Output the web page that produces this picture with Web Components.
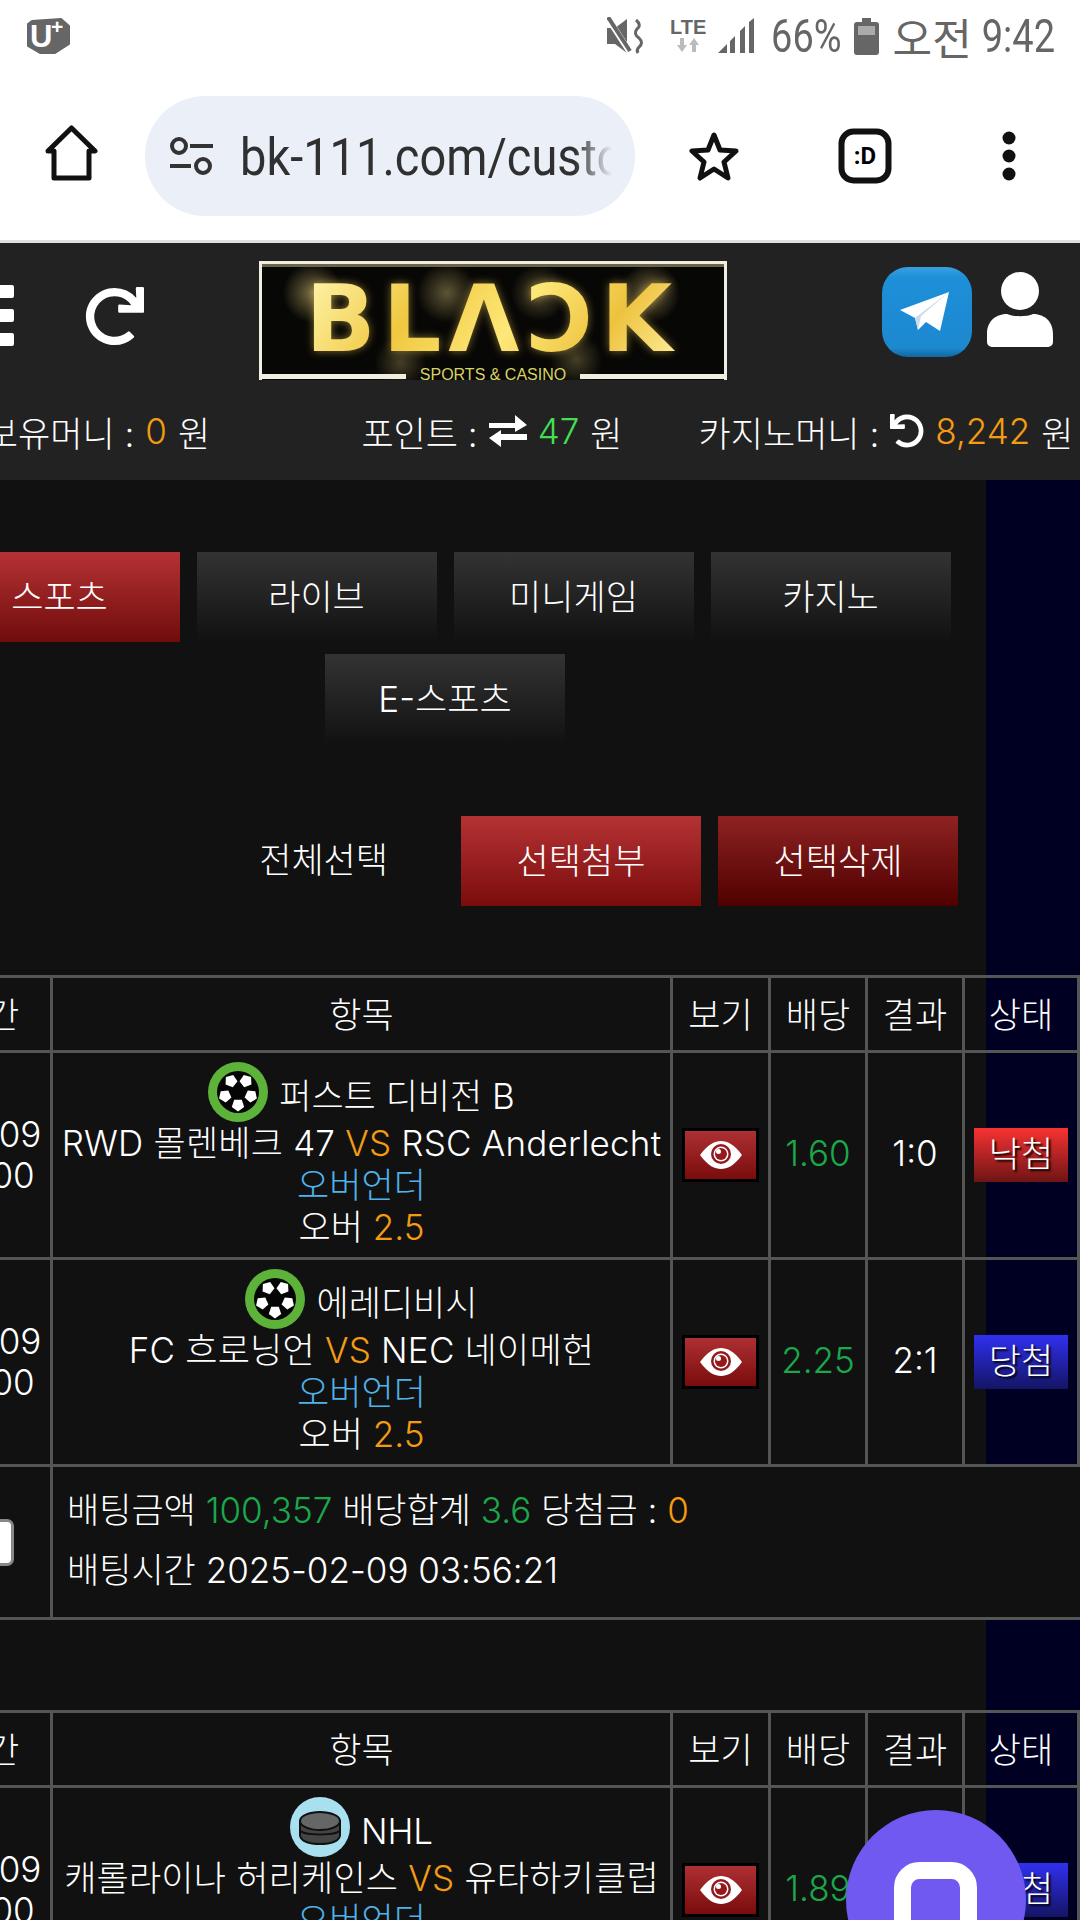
<!DOCTYPE html>
<html lang="ko">
<head>
<meta charset="utf-8">
<title>BLACK</title>
<style>
    html, body { margin: 0; background: #111; }
    body {
        width: 1080px;
        height: 1920px;
        overflow: hidden;
        position: relative;
        font-family: 'Inter', 'Noto Sans CJK KR', sans-serif;
        font-weight: 300;
        font-size: 35px;
        color: #fff;
    }
</style>
</head>
<body>
<status-bar></status-bar>
<browser-bar url="bk-111.com/custom"></browser-bar>
<site-header></site-header>
<main-area>
    <game-tabs>
        <game-tab active>스포츠</game-tab>
        <game-tab>라이브</game-tab>
        <game-tab>미니게임</game-tab>
        <game-tab>카지노</game-tab>
        <game-tab>E-스포츠</game-tab>
    </game-tabs>
    <action-bar></action-bar>
    <bet-table>
        <bet-row sport="soccer" league="퍼스트 디비전 B" home="RWD 몰렌베크 47" away="RSC Anderlecht" odds="1.60" result="1:0" status="낙첨"></bet-row>
        <bet-row sport="soccer" league="에레디비시" home="FC 흐로닝언" away="NEC 네이메헌" odds="2.25" result="2:1" status="당첨"></bet-row>
        <bet-summary stake="100,357" total="3.6" win="0" time="2025-02-09 03:56:21"></bet-summary>
    </bet-table>
    <bet-table>
        <bet-row sport="hockey" league="NHL" home="캐롤라이나 허리케인스" away="유타하키클럽" odds="1.89" result="" status="당첨"></bet-row>
    </bet-table>
</main-area>
<chat-button></chat-button>

<script>
const COLS = '129px 620px 98px 97px 97px 115px';

// five points around a centre, for the panels of the ball
const pentagon = (cx, cy, r, turn) => {
    const points = [];
    for (let i = 0; i < 5; i++) {
        const angle = (turn + i * 72 - 90) * Math.PI / 180;
        points.push((cx + r * Math.cos(angle)).toFixed(1) + ',' + (cy + r * Math.sin(angle)).toFixed(1));
    }
    return `<polygon points="${points.join(' ')}"/>`;
};

class StatusBar extends HTMLElement {
    constructor() {
        super();
        this.attachShadow({ mode: 'open' });
        this.shadowRoot.innerHTML = `
            <style>
            :host { display: flex; align-items: center; height: 72px; padding: 0 25px 0 27px; background: #fff; color: #666; box-sizing: border-box; }
            .carrier { position: relative; width: 43px; height: 36px; margin-right: auto; }
            .carrier svg { display: block; }
            .carrier span { position: absolute; left: 3px; top: 3px; color: #fff; font: 700 31px/32px 'Liberation Sans', sans-serif; }
            .carrier sup { position: absolute; left: 24px; top: -2px; color: #fff; font: 700 21px/21px 'Liberation Sans', sans-serif; }
            .right { display: flex; align-items: center; }
            .tall { display: inline-block; font-family: 'Roboto', sans-serif; font-weight: 400; font-size: 38px; transform: scaleY(1.2); line-height: 1; }
            .lte { position: relative; width: 36px; height: 38px; margin: 0 12px 0 26px; font: 700 20px/20px 'Liberation Sans', sans-serif; text-align: center; }
            .lte svg { position: absolute; left: 7px; top: 21px; }
            .ko { font-family: 'Noto Sans CJK KR', sans-serif; font-weight: 400; font-size: 43px; transform: none; }
            </style>
            <div class="carrier">
                <svg width="43" height="36" viewBox="0 0 43 36"><path d="M5 3 L34 1 L42 8 V26 L28 35 H13 L1 28 V6 Z" fill="#666" stroke="#666" stroke-linejoin="round" stroke-width="2"/></svg>
                <span>U</span><sup>+</sup>
            </div>
            <div class="right">
                <svg width="37" height="38" viewBox="0 0 37 38" fill="#666">
                    <path d="M0 11 H8 L20 2 V36 L8 27 H0 Z"/>
                    <path d="M2 3 L24 37" stroke="#fff" stroke-width="6"/>
                    <path d="M1 0 L23 34" stroke="#666" stroke-width="4"/>
                    <path d="M29 3 q6 5 1 9 q-4 5 2 9 q5 5 0 9 q-3 3 -1 6" fill="none" stroke="#666" stroke-width="3"/>
                </svg>
                <div class="lte">LTE
                    <svg width="22" height="14" viewBox="0 0 22 14" fill="#bbb"><path d="M3 0 H7 V7 H10 L5 14 L0 7 H3 Z M15 14 H19 V7 H22 L17 0 L12 7 H15 Z"/></svg>
                </div>
                <svg width="36" height="36" viewBox="0 0 36 36" fill="#666" style="margin-right:17px">
                    <path d="M0 35 L9 26 V35 Z M12 23 L17 18 V35 H12 Z M22 13 L27 8 V35 H22 Z M31 4 L36 0 V35 H31 Z"/>
                </svg>
                <span class="tall">66%</span>
                <svg width="25" height="37" viewBox="0 0 25 37" style="margin:0 14px 0 12px"><path d="M8 0 H17 V4 H22 a3 3 0 0 1 3 3 V34 a3 3 0 0 1-3 3 H3 a3 3 0 0 1-3-3 V7 a3 3 0 0 1 3-3 H8 Z" fill="#666"/><rect x="4" y="8" width="17" height="9" fill="#aaa"/></svg>
                <span class="tall ko">오전</span>
                <span class="tall" style="margin-left:10px">9:42</span>
            </div>
        `;
    }
}

class BrowserBar extends HTMLElement {
    constructor() {
        super();
        this.attachShadow({ mode: 'open' });
        this.shadowRoot.innerHTML = `
            <style>
            :host { display: flex; align-items: center; height: 171px; background: #fff; border-bottom: 3px solid #dfe1dc; box-sizing: border-box; position: relative; }
            .home { margin: 0 47px 6px 45px; }
            .pill { display: flex; align-items: center; width: 490px; height: 120px; box-sizing: border-box; padding: 0 23px 0 25px; background: #ebeff8; border-radius: 60px; }
            .url { flex: 1; margin-left: 27px; overflow: hidden; white-space: nowrap; color: #303030; font: 400 47px 'Roboto', sans-serif; transform: scaleY(1.1); -webkit-mask-image: linear-gradient(to right, #000 90%, transparent); mask-image: linear-gradient(to right, #000 90%, transparent); }
            .star { margin-left: 53px; }
            .tabs { margin-left: 98px; }
            .more { margin-left: 110px; }
            </style>
            <svg class="home" width="53" height="56" viewBox="0 0 53 56"><path d="M26.5 3 L50 26 H44 V53 H9 V26 H3 Z" fill="none" stroke="#111" stroke-width="5" stroke-linejoin="round"/></svg>
            <div class="pill">
                <svg width="43" height="38" viewBox="0 0 43 38" fill="none" stroke="#333" stroke-width="4"><circle cx="9" cy="9" r="7"/><path d="M20 9 H43 M0 29 H21"/><circle cx="33" cy="29" r="7"/></svg>
                <div class="url">${this.getAttribute('url')}</div>
            </div>
            <svg class="star" width="52" height="50" viewBox="0 0 52 50"><path d="M26 4 L32 19 L48 20 L36 31 L40 47 L26 38 L12 47 L16 31 L4 20 L20 19 Z" fill="none" stroke="#111" stroke-width="5" stroke-linejoin="round"/></svg>
            <svg class="tabs" width="54" height="56" viewBox="0 0 54 56"><rect x="3.5" y="3.5" width="47" height="49" rx="12" fill="none" stroke="#111" stroke-width="6"/><text x="27" y="36" font-family="Roboto, sans-serif" font-weight="700" font-size="24" text-anchor="middle">:D</text></svg>
            <svg class="more" width="14" height="50" viewBox="0 0 14 50" fill="#111"><circle cx="7" cy="7" r="6.5"/><circle cx="7" cy="25" r="6.5"/><circle cx="7" cy="43" r="6.5"/></svg>
        `;
    }
}

class SiteHeader extends HTMLElement {
    constructor() {
        super();
        this.attachShadow({ mode: 'open' });
        this.shadowRoot.innerHTML = `
            <style>
            :host { display: block; height: 237px; background: #222; overflow: hidden; }
            .top { display: flex; align-items: flex-start; height: 137px; padding-top: 18px; box-sizing: border-box; }
            .burger { display: flex; flex-direction: column; gap: 11px; width: 14px; margin: 24px 71px 0 0; }
            .burger i { display: block; height: 13px; background: #fff; border-radius: 0 2px 2px 0; }
            .refresh { margin: 26px 115px 0 0; }
            site-logo { margin-right: 155px; }
            .tg { margin-top: 6px; }
            .user { margin: 11px 0 0 15px; }
            .money { display: grid; grid-template-columns: repeat(3, 394px); margin-left: -99px; height: 100px; align-items: center; padding-top: 2px; box-sizing: border-box; }
            .money div { display: flex; justify-content: center; align-items: center; gap: 11px; white-space: nowrap; }
            .orange { color: #f39c12; }
            .green { color: #44dd55; }
            </style>
            <div class="top">
                <div class="burger"><i></i><i></i><i></i></div>
                <svg class="refresh" width="59" height="59" viewBox="0 0 512 512" fill="#fff"><path d="M500.33 0h-47.41a12 12 0 0 0-12 12.57l4 82.76A247.42 247.42 0 0 0 256 8C119.34 8 7.9 119.53 8 256.19 8.1 393.07 119.1 504 256 504a247.1 247.1 0 0 0 166.18-63.91 12 12 0 0 0 .48-17.43l-34-34a12 12 0 0 0-16.38-.55A176 176 0 1 1 402.1 157.8l-101.53-4.87a12 12 0 0 0-12.57 12v47.41a12 12 0 0 0 12 12h200.33a12 12 0 0 0 12-12V12a12 12 0 0 0-12-12z"/></svg>
                <site-logo></site-logo>
                <svg class="tg" width="90" height="90" viewBox="0 0 90 90">
                    <defs><linearGradient id="tg" x1="0" y1="0" x2="0" y2="1"><stop offset="0" stop-color="#3aa0e0"/><stop offset=".12" stop-color="#1e8fd8"/><stop offset=".9" stop-color="#1c88d0"/><stop offset="1" stop-color="#12679e"/></linearGradient></defs>
                    <rect width="90" height="90" rx="26" fill="url(#tg)"/>
                    <path d="M67 25 L18 43 L33 51 L36 63 L44 55 L58 64 Z" fill="#fff"/>
                    <path d="M67 25 L33 51 L36 63 L39 49 Z" fill="#c8dcec"/>
                </svg>
                <svg class="user" width="66" height="75" viewBox="0 0 66 75" fill="#fff"><ellipse cx="33" cy="19" rx="19" ry="19"/><path d="M0 62 C0 48 10 42 20 42 C26 45 40 45 46 42 C56 42 66 48 66 62 V70 a5 5 0 0 1-5 5 H5 a5 5 0 0 1-5-5Z"/></svg>
            </div>
            <div class="money">
                <div>보유머니 : <span class="orange">0</span> 원</div>
                <div>포인트 :
                    <svg width="38" height="32" viewBox="0 0 38 32" fill="#fff"><path d="M0 8 H26 V0 L38 10 L26 17 V13 H0 Z M38 19 H12 V15 L0 23 L12 32 V25 H38 Z"/></svg>
                    <span class="green">47</span> 원</div>
                <div>카지노머니 :
                    <svg width="34" height="34" viewBox="0 0 512 512" fill="#fff" style="transform:scaleX(-1)"><path d="M500.33 0h-47.41a12 12 0 0 0-12 12.57l4 82.76A247.42 247.42 0 0 0 256 8C119.34 8 7.9 119.53 8 256.19 8.1 393.07 119.1 504 256 504a247.1 247.1 0 0 0 166.18-63.91 12 12 0 0 0 .48-17.43l-34-34a12 12 0 0 0-16.38-.55A176 176 0 1 1 402.1 157.8l-101.53-4.87a12 12 0 0 0-12.57 12v47.41a12 12 0 0 0 12 12h200.33a12 12 0 0 0 12-12V12a12 12 0 0 0-12-12z"/></svg>
                    <span class="orange">8,242</span> 원</div>
            </div>
        `;
    }
}

class SiteLogo extends HTMLElement {
    constructor() {
        super();
        this.attachShadow({ mode: 'open' });
        this.shadowRoot.innerHTML = `
            <style>
            :host { display: flex; flex-direction: column; align-items: center; width: 468px; height: 119px; box-sizing: border-box; padding: 10px 8px 0 0; border: solid #efeee0; border-width: 3px 3px 0; background:
                radial-gradient(circle at 11% 25%, rgba(255, 230, 140, .45), transparent 30px),
                radial-gradient(circle at 40% 25%, rgba(255, 230, 140, .35), transparent 30px),
                radial-gradient(circle at 60% 25%, rgba(255, 230, 140, .3), transparent 28px),
                radial-gradient(circle at 84% 25%, rgba(255, 230, 140, .4), transparent 30px),
                radial-gradient(circle at 30% 85%, rgba(255, 230, 140, .25), transparent 26px),
                radial-gradient(circle at 68% 82%, rgba(255, 230, 140, .25), transparent 26px),
                #070705;
                box-shadow: inset 0 3px 0 #6a6548; position: relative; overflow: hidden; }
            .word { font: 700 92px/92px 'DejaVu Sans', sans-serif; letter-spacing: 7px; margin-right: -7px; color: transparent; background: linear-gradient(125deg, #fff6b0, #f0c840 30%, #fde878 55%, #eec23e 78%, #fff0a0); -webkit-background-clip: text; background-clip: text; filter: drop-shadow(0 0 4px rgba(255, 215, 90, .5)); }
            .foot { display: flex; align-items: flex-end; gap: 14px; width: 100%; height: 14px; position: absolute; left: 0; bottom: 0; color: #d9d264; font: 400 16px/14px 'Liberation Sans', sans-serif; white-space: nowrap; }
            .foot span { transform: translateY(2px); }
            .foot i { flex: 1; height: 5px; margin-bottom: 1px; background: #efeee0; }
            </style>
            <div class="word">BLΛƆK</div>
            <div class="foot"><i></i><span>SPORTS &amp; CASINO</span><i></i></div>
        `;
    }
}

class MainArea extends HTMLElement {
    constructor() {
        super();
        this.attachShadow({ mode: 'open' });
        this.shadowRoot.innerHTML = `
            <style>
            :host { display: block; height: 1440px; overflow: hidden; background: linear-gradient(to right, #111 986px, #000022 986px); }
            </style>
            <slot></slot>
        `;
    }
}

class GameTabs extends HTMLElement {
    constructor() {
        super();
        this.attachShadow({ mode: 'open' });
        this.shadowRoot.innerHTML = `
            <style>
            :host { display: flex; flex-wrap: wrap; justify-content: center; gap: 12px 17px; width: 1070px; margin: 72px 0 0 -90px; }
            </style>
            <slot></slot>
        `;
    }
}

class GameTab extends HTMLElement {
    constructor() {
        super();
        this.attachShadow({ mode: 'open' });
        this.shadowRoot.innerHTML = `
            <style>
            :host { display: flex; align-items: center; justify-content: center; width: 240px; height: 90px; padding-bottom: 6px; box-sizing: border-box; background: linear-gradient(#333, #111); }
            :host([active]) { background: linear-gradient(#b53234, #700c0c); }
            </style>
            <slot></slot>
        `;
    }
}

class ActionBar extends HTMLElement {
    constructor() {
        super();
        this.attachShadow({ mode: 'open' });
        this.shadowRoot.innerHTML = `
            <style>
            :host { display: flex; align-items: center; justify-content: flex-end; gap: 17px; width: 958px; margin-top: 72px; }
            span { margin-right: 56px; padding-bottom: 8px; }
            div { display: flex; align-items: center; justify-content: center; width: 240px; height: 90px; padding-bottom: 6px; box-sizing: border-box; background: linear-gradient(#b53234, #7a0c0c); }
            div + div { background: linear-gradient(#8e2222, #500000); }
            </style>
            <span>전체선택</span>
            <div>선택첨부</div>
            <div>선택삭제</div>
        `;
    }
}

class BetTable extends HTMLElement {
    constructor() {
        super();
        this.attachShadow({ mode: 'open' });
        this.shadowRoot.innerHTML = `
            <style>
            :host { display: block; width: 1156px; margin: 69px 0 90px -76px; border-top: 3px solid #555; }
            .head { display: grid; grid-template-columns: ${COLS}; height: 75px; border-bottom: 3px solid #555; box-sizing: border-box; }
            .head div { display: flex; align-items: center; justify-content: center; border-right: 3px solid #555; padding-bottom: 4px; }
            </style>
            <div class="head"><div>시간</div><div>항목</div><div>보기</div><div>배당</div><div>결과</div><div>상태</div></div>
            <slot></slot>
        `;
    }
}

class BetRow extends HTMLElement {
    constructor() {
        super();
        this.attachShadow({ mode: 'open' });
        const a = (n) => this.getAttribute(n);
        const win = a('status') === '당첨';
        this.shadowRoot.innerHTML = `
            <style>
            :host { display: grid; grid-template-columns: ${COLS}; height: 207px; border-bottom: 3px solid #555; box-sizing: border-box; }
            .c { display: flex; flex-direction: column; align-items: center; justify-content: center; border-right: 3px solid #555; line-height: 42px; text-align: center; white-space: nowrap; }
            .date { line-height: 41px; padding: 0 0 1px 7px; }
            .num { padding-bottom: 5px; }
            .league { display: flex; align-items: center; gap: 11px; height: 60px; }
            .league span { padding-top: 8px; }
            .match { letter-spacing: .2px; }
            .orange { color: #f39c12; }
            .blue { color: #4fb3ea; }
            .green { color: #1aa84a; }
            .eye { display: flex; align-items: center; justify-content: center; width: 77px; height: 54px; box-sizing: border-box; border: 3px solid #000; background: linear-gradient(#ad3033, #7a0c0c); }
            .badge { display: flex; align-items: center; justify-content: center; width: 94px; height: 54px; padding-bottom: 2px; box-sizing: border-box; background: linear-gradient(#f83232, #6e1414); text-shadow: 2px 2px 2px #000; }
            .badge.win { background: linear-gradient(#3030f0, #141466); }
            </style>
            <div class="c date"><span>02-09</span><span>21:00</span></div>
            <div class="c">
                <div class="league"><sport-icon type="${a('sport')}"></sport-icon><span>${a('league')}</span></div>
                <div class="match">${a('home')} <span class="orange">VS</span> ${a('away')}</div>
                <div class="blue">오버언더</div>
                <div>오버 <span class="orange">2.5</span></div>
            </div>
            <div class="c"><div class="eye">
                <svg width="42" height="28" viewBox="0 0 42 28"><path d="M0 14 C8 3 15 0 21 0 S34 3 42 14 C34 25 27 28 21 28 S8 25 0 14 Z" fill="#fff"/><circle cx="21" cy="13" r="10" fill="#94191c"/><circle cx="21" cy="13" r="7.500" fill="#fff"/><circle cx="21" cy="13" r="6" fill="#94191c"/><circle cx="18.500" cy="10.500" r="2.500" fill="#fff"/></svg>
            </div></div>
            <div class="c green num">${a('odds')}</div>
            <div class="c num">${a('result')}</div>
            <div class="c"><div class="badge ${win ? 'win' : ''}">${a('status')}</div></div>
        `;
    }
}

class SportIcon extends HTMLElement {
    constructor() {
        super();
        this.attachShadow({ mode: 'open' });
        const soccer = `
            <circle cx="30" cy="30" r="30" fill="#5db33a"/>
            <circle cx="30" cy="30" r="21" fill="#050505"/>
            <g fill="#fff">
                ${pentagon(23, 19, 6.5, 20)}
                ${pentagon(38, 19, 6.5, -20)}
                ${pentagon(17, 34, 6.5, 30)}
                ${pentagon(43, 34, 6.5, -30)}
                ${pentagon(30, 43, 6.5, 180)}
            </g>`;
        const hockey = `
            <circle cx="30" cy="30" r="30" fill="#a8e0f0"/>
            <path d="M10 24 V38 C10 44 19 47 30 47 S50 44 50 38 V24 Z" fill="#444" stroke="#111" stroke-width="2"/>
            <ellipse cx="30" cy="24" rx="20" ry="9" fill="#666" stroke="#111" stroke-width="2"/>
            <path d="M10 33 C12 39 48 39 50 33" fill="none" stroke="#111" stroke-width="2"/>`;
        this.shadowRoot.innerHTML = `
            <style>:host { display: block; width: 60px; height: 60px; } svg { display: block; }</style>
            <svg width="60" height="60" viewBox="0 0 60 60">${this.getAttribute('type') === 'hockey' ? hockey : soccer}</svg>
        `;
    }
}

class BetSummary extends HTMLElement {
    constructor() {
        super();
        this.attachShadow({ mode: 'open' });
        const a = (n) => this.getAttribute(n);
        this.shadowRoot.innerHTML = `
            <style>
            :host { display: grid; grid-template-columns: 129px 1fr; height: 153px; border-bottom: 3px solid #555; box-sizing: border-box; background: #111; }
            .check { display: flex; align-items: center; justify-content: center; border-right: 3px solid #555; }
            .check i { display: block; width: 54px; height: 47px; box-sizing: border-box; background: #fff; border: 3px solid #888; border-radius: 7px; }
            .text { display: flex; flex-direction: column; justify-content: center; padding: 0 0 4px 14px; line-height: 60px; white-space: nowrap; }
            .orange { color: #f39c12; }
            .green { color: #1aa84a; }
            </style>
            <div class="check"><i></i></div>
            <div class="text">
                <div>배팅금액 <span class="green">${a('stake')}</span> 배당합계 <span class="green">${a('total')}</span> 당첨금 : <span class="orange">${a('win')}</span></div>
                <div>배팅시간 ${a('time')}</div>
            </div>
        `;
    }
}

class ChatButton extends HTMLElement {
    constructor() {
        super();
        this.attachShadow({ mode: 'open' });
        this.shadowRoot.innerHTML = `
            <style>
            :host { position: absolute; left: 846px; top: 1810px; width: 180px; height: 180px; border-radius: 50%; background: #7059f0; }
            svg { position: absolute; left: 48px; top: 52px; }
            </style>
            <svg width="83" height="92" viewBox="0 0 83 92"><rect x="8.500" y="8.500" width="66" height="69" rx="17" fill="none" stroke="#fff" stroke-width="17"/></svg>
        `;
    }
}

customElements.define('status-bar', StatusBar);
customElements.define('browser-bar', BrowserBar);
customElements.define('site-logo', SiteLogo);
customElements.define('site-header', SiteHeader);
customElements.define('main-area', MainArea);
customElements.define('game-tabs', GameTabs);
customElements.define('game-tab', GameTab);
customElements.define('action-bar', ActionBar);
customElements.define('sport-icon', SportIcon);
customElements.define('bet-table', BetTable);
customElements.define('bet-row', BetRow);
customElements.define('bet-summary', BetSummary);
customElements.define('chat-button', ChatButton);
</script>
</body>
</html>
